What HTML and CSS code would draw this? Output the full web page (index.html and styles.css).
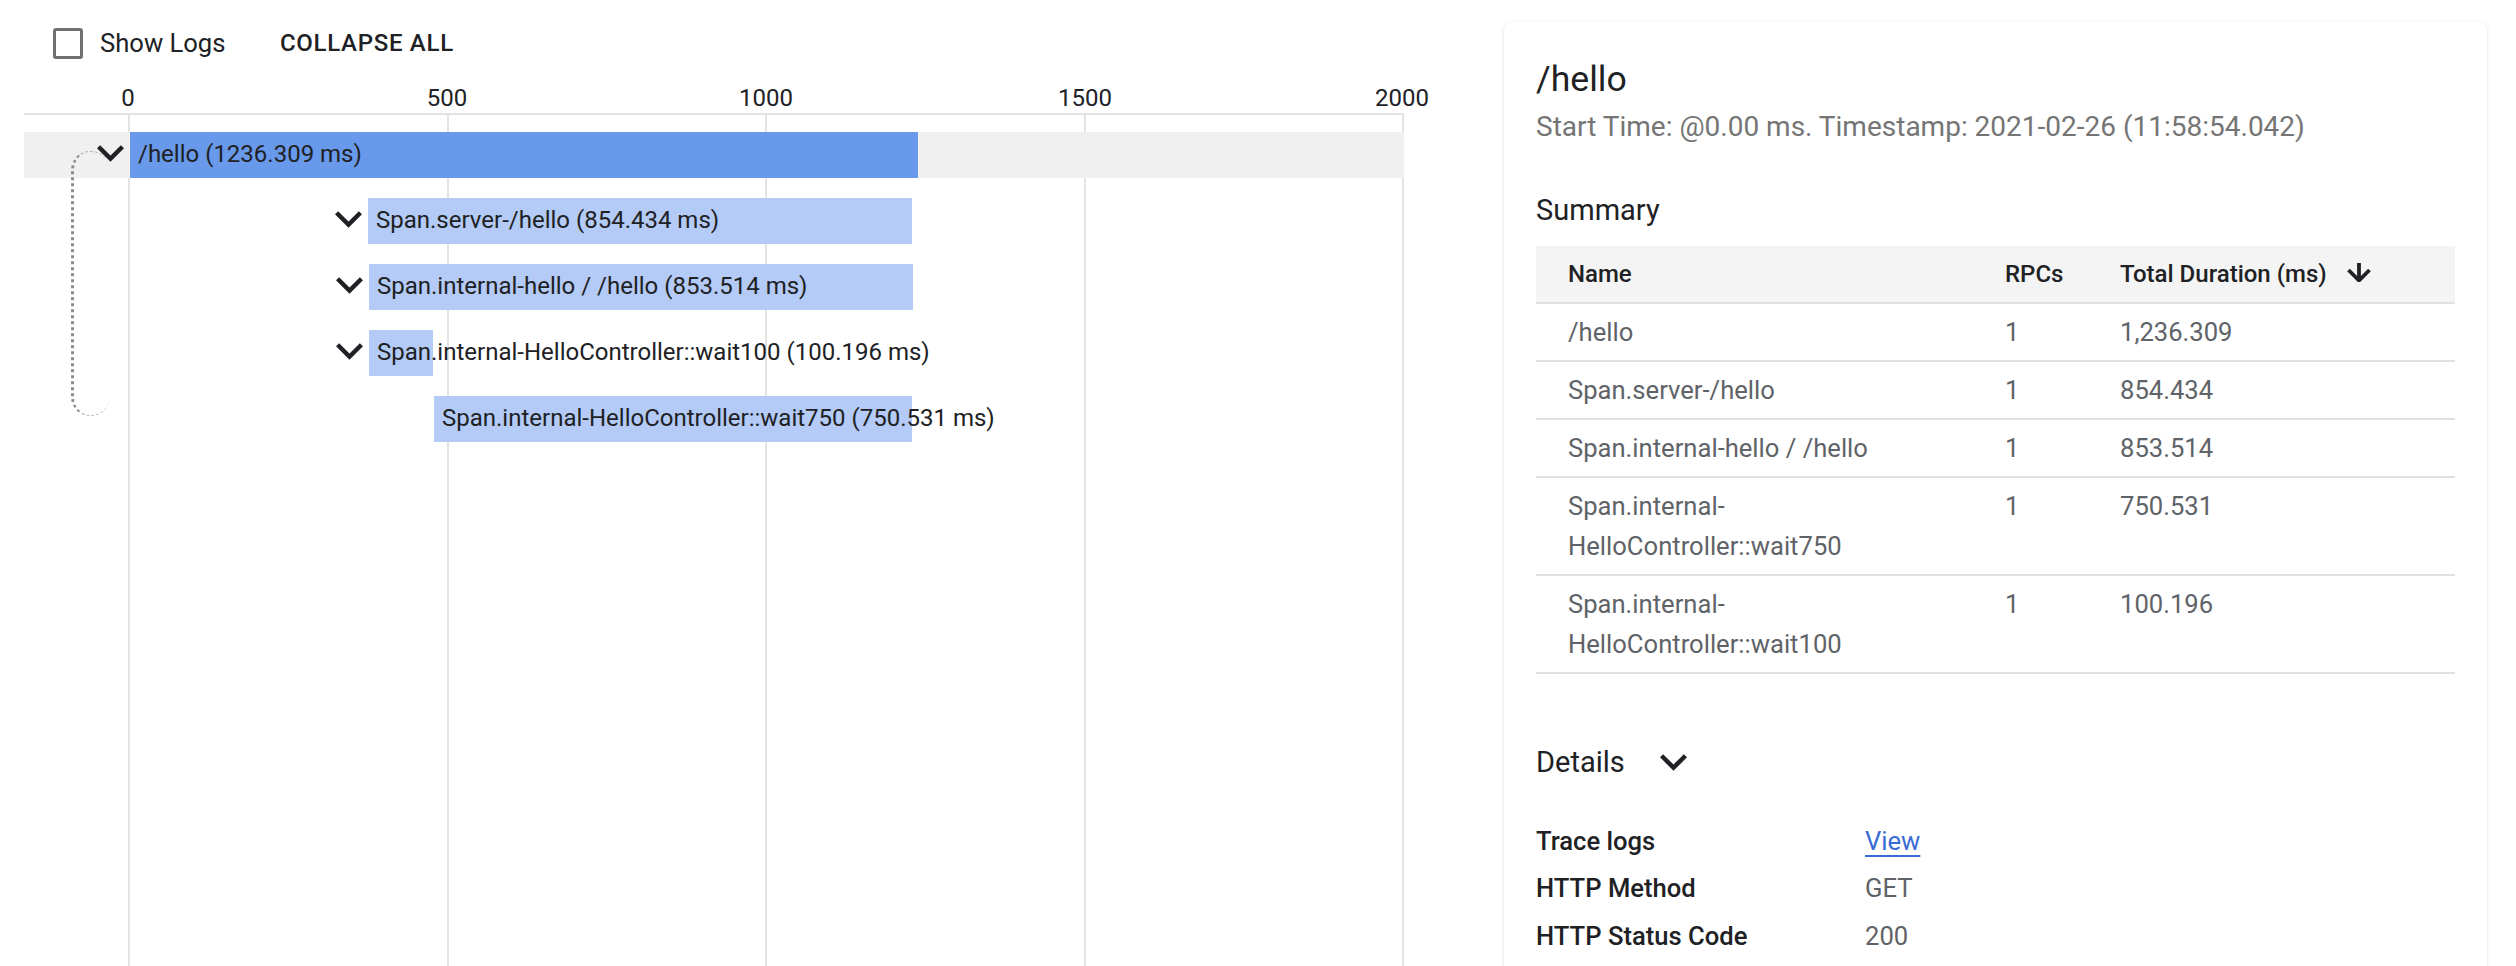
FILE: index.html
```html
<!DOCTYPE html>
<html lang="en">
<head>
<meta charset="utf-8">
<title>Trace</title>
<link rel="stylesheet" href="styles.css">
</head>
<body>
<div class="page">
  <section class="timeline">
    <div class="toolbar">
      <span class="checkbox"></span>
      <span class="show-logs">Show Logs</span>
      <button class="collapse">COLLAPSE ALL</button>
    </div>
    <div class="axis">
      <span class="tick" style="left:104px">0</span>
      <span class="tick" style="left:423px">500</span>
      <span class="tick" style="left:742px">1000</span>
      <span class="tick" style="left:1061px">1500</span>
      <span class="tick" style="left:1378px">2000</span>
    </div>
    <div class="plot">
      <span class="gridline" style="left:104px"></span>
      <span class="gridline" style="left:422.6px"></span>
      <span class="gridline" style="left:741.2px"></span>
      <span class="gridline" style="left:1059.8px"></span>
      <span class="gridline" style="left:1378.4px"></span>

      <div class="row selected">
        <svg class="chev" style="left:73px" viewBox="0 0 27 16.67"><path d="M23.83 0L13.5 10.3 3.17 0 0 3.17l13.5 13.5 13.5-13.5z"/></svg>
        <div class="bar" style="left:106px;width:787.8px">/hello (1236.309 ms)</div>
      </div>
      <div class="row">
        <svg class="chev" style="left:311px" viewBox="0 0 27 16.67"><path d="M23.83 0L13.5 10.3 3.17 0 0 3.17l13.5 13.5 13.5-13.5z"/></svg>
        <div class="bar" style="left:344px;width:544.4px">Span.server-/hello (854.434 ms)</div>
      </div>
      <div class="row">
        <svg class="chev" style="left:312px" viewBox="0 0 27 16.67"><path d="M23.83 0L13.5 10.3 3.17 0 0 3.17l13.5 13.5 13.5-13.5z"/></svg>
        <div class="bar" style="left:345px;width:543.9px">Span.internal-hello / /hello (853.514 ms)</div>
      </div>
      <div class="row">
        <svg class="chev" style="left:312px" viewBox="0 0 27 16.67"><path d="M23.83 0L13.5 10.3 3.17 0 0 3.17l13.5 13.5 13.5-13.5z"/></svg>
        <div class="bar" style="left:345px;width:63.8px">Span.internal-HelloController::wait100 (100.196 ms)</div>
      </div>
      <div class="row">
        <div class="bar" style="left:410px;width:478.2px">Span.internal-HelloController::wait750 (750.531 ms)</div>
      </div>

      <span class="connector"></span>
    </div>
  </section>

  <aside class="card">
    <h1 class="title">/hello</h1>
    <div class="subtitle">Start Time: @0.00 ms. Timestamp: 2021-02-26 (11:58:54.042)</div>
    <h2 class="section-h">Summary</h2>
    <table class="summary">
      <colgroup><col class="c-name"><col class="c-rpc"><col class="c-dur"></colgroup>
      <thead>
        <tr>
          <th>Name</th>
          <th>RPCs</th>
          <th><span class="sort">Total Duration (ms)<svg class="arrow" viewBox="0 0 24 19"><path d="M12 0V17M1.5 7L12 17.5 22.5 7"/></svg></span></th>
        </tr>
      </thead>
      <tbody>
        <tr><td>/hello</td><td>1</td><td>1,236.309</td></tr>
        <tr><td>Span.server-/hello</td><td>1</td><td>854.434</td></tr>
        <tr><td>Span.internal-hello / /hello</td><td>1</td><td>853.514</td></tr>
        <tr><td>Span.internal-HelloController::wait750</td><td>1</td><td>750.531</td></tr>
        <tr><td>Span.internal-HelloController::wait100</td><td>1</td><td>100.196</td></tr>
      </tbody>
    </table>
    <div class="details-head">
      <span>Details</span>
      <svg class="chev-d" viewBox="0 0 27 16.67"><path d="M23.83 0L13.5 10.3 3.17 0 0 3.17l13.5 13.5 13.5-13.5z"/></svg>
    </div>
    <div class="details">
      <span class="k">Trace logs</span><span class="v"><a href="#" class="link">View</a></span>
      <span class="k">HTTP Method</span><span class="v">GET</span>
      <span class="k">HTTP Status Code</span><span class="v">200</span>
    </div>
  </aside>
</div>
</body>
</html>
```

FILE: styles.css
```css
* { box-sizing: border-box; }
html, body { margin: 0; padding: 0; }
body {
  font-family: Roboto, "Noto Sans", "Liberation Sans", sans-serif;
  color: #202124;
  background: #fff;
  overflow: hidden;
}
.page {
  display: flex;
  height: 966px;
  overflow: hidden;
}

/* ---------- timeline ---------- */
.timeline {
  flex: 0 0 1404px;
  padding-left: 24px;
  display: flex;
  flex-direction: column;
}
.toolbar {
  display: flex;
  align-items: center;
  height: 40px;
  margin-top: 23px;
  padding-left: 28.5px;
}
.checkbox {
  width: 30px;
  height: 31px;
  border: 3px solid #707070;
  border-radius: 3px;
}
.show-logs {
  margin-left: 17.5px;
  font-size: 25.6px;
}
.collapse {
  margin-left: 54.5px;
  padding: 0;
  border: 0;
  background: none;
  font-family: inherit;
  color: #202124;
  font-size: 24px;
  font-weight: 500;
  letter-spacing: 0.7px;
}
.axis {
  position: relative;
  height: 31px;
  margin-top: 21px;
  border-bottom: 2px solid #e2e2e2;
}
.tick {
  position: absolute;
  top: 0;
  transform: translateX(-50%);
  font-size: 24px;
  line-height: 29px;
  color: #202124;
}
.plot {
  position: relative;
  flex: 1;
  padding-top: 17px;
}
.gridline {
  position: absolute;
  top: 0;
  bottom: 0;
  width: 2px;
  background: #e3e3e3;
}
.row {
  position: relative;
  height: 46px;
  margin-bottom: 20px;
}
.row.selected {
  background: #f0f0f0;
}
.bar {
  position: absolute;
  top: 0;
  height: 46px;
  padding-left: 8px;
  background: #b3cbf6;
  font-size: 24px;
  line-height: 44px;
  white-space: nowrap;
  color: #202124;
}
.row.selected .bar {
  background: #6899ea;
}
.chev {
  position: absolute;
  top: 13px;
  width: 27px;
  height: 17px;
  fill: #202124;
}
.connector {
  position: absolute;
  left: 47px;
  top: 36px;
  width: 39px;
  height: 265px;
  border-left: 3px dotted #8c8c8c;
  border-top: 1px dashed #b5b5b5;
  border-bottom: 1px dashed #b5b5b5;
  border-right: 0;
  border-radius: 19px;
  z-index: 1;
}

/* ---------- card ---------- */
.card {
  flex: 0 0 983px;
  align-self: flex-start;
  height: 1000px;
  margin-left: 100px;
  margin-top: 22px;
  padding: 34.7px 32px 0;
  background: #fff;
  border-radius: 8px;
  box-shadow: 0 1px 2px rgba(60, 64, 67, 0.14), 0 1px 5px rgba(60, 64, 67, 0.08);
}
.title {
  margin: 0;
  font-size: 35.6px;
  line-height: 44px;
  font-weight: 400;
}
.subtitle {
  margin-top: 8.4px;
  font-size: 28px;
  line-height: 36px;
  color: #757575;
}
.section-h {
  margin: 47px 0 0;
  font-size: 29px;
  line-height: 36px;
  font-weight: 400;
}
.summary {
  margin-top: 18px;
  width: 100%;
  table-layout: fixed;
  border-collapse: separate;
  border-spacing: 0;
}
.c-name { width: 469px; }
.c-rpc { width: 115px; }
.summary th {
  background: #f4f4f4;
  text-align: left;
  font-size: 24px;
  font-weight: 500;
  line-height: 40px;
  padding: 8px 16px 8px 0;
  border-bottom: 2px solid #e0e0e0;
  color: #202124;
}
.summary td {
  font-size: 25.6px;
  line-height: 40px;
  padding: 8px 16px 8px 0;
  border-bottom: 2px solid #e0e0e0;
  color: #5f6368;
  vertical-align: top;
}
.summary th:first-child,
.summary td:first-child {
  padding-left: 32px;
}
.sort {
  display: inline-flex;
  align-items: center;
  gap: 20px;
}
.arrow {
  flex-shrink: 0;
  width: 24px;
  height: 19px;
  fill: none;
  stroke: #202124;
  stroke-width: 3.8px;
  margin-top: -4px;
}
.details-head {
  display: flex;
  align-items: center;
  gap: 35px;
  margin-top: 68px;
  font-size: 29px;
  line-height: 40px;
}
.chev-d {
  width: 27px;
  height: 17px;
  fill: #202124;
}
.details {
  display: grid;
  grid-template-columns: 329px 1fr;
  margin-top: 35.7px;
  font-size: 25.6px;
  line-height: 47.5px;
}
.details .k {
  font-weight: 500;
  color: #202124;
}
.details .v {
  color: #5f6368;
}
.link {
  color: #3a6bd6;
  text-decoration: underline;
  text-decoration-thickness: 2px;
  text-underline-offset: 5px;
}
```
